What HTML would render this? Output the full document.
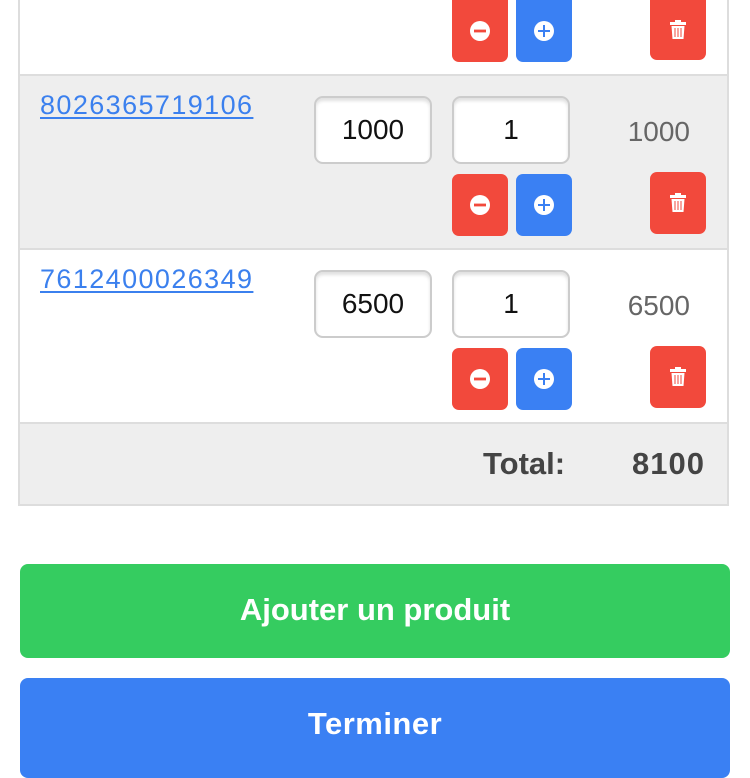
<!DOCTYPE html>
<html><head><meta charset="utf-8"><style>
*{box-sizing:border-box;margin:0;padding:0}
body{width:750px;height:750px;overflow:hidden;background:#fff;font-family:"Liberation Sans",Helvetica,Arial,sans-serif;position:relative}
.a{position:absolute}
.row{position:absolute;left:18px;width:711px;border-left:2px solid #ddd;border-right:2px solid #ddd}
.g{background:#eee}
.hl{position:absolute;left:18px;width:711px;height:2px;background:#ddd}
.lnk{position:absolute;left:40px;color:#3b80ee;font-size:27px;text-decoration:underline;text-decoration-thickness:2px;text-underline-offset:3px;letter-spacing:1.4px}
.inp{position:absolute;width:118px;height:68px;border:2px solid #ccc;border-radius:9px;background:#fff;box-shadow:inset 0 3px 3px rgba(0,0,0,.12);font-size:28px;color:#111;text-align:center;line-height:64px}
.btn{position:absolute;width:56px;height:62px;border-radius:7px}
.red{background:#f2493c}.blue{background:#3a80f3}
.price{position:absolute;right:60px;font-size:28px;color:#666}
.ic{position:absolute;left:18px;top:21px;width:20px;height:20px}
.big{position:absolute;left:20px;width:710px;border-radius:8px;color:#fff;font-weight:bold;font-size:31px;text-align:center}
</style></head><body>
<div class="row" style="top:0;height:74px;background:#fff"></div>
<div class="hl" style="top:74px"></div>
<div class="row g" style="top:76px;height:172px"></div>
<div class="hl" style="top:248px"></div>
<div class="row" style="top:250px;height:172px;background:#fff"></div>
<div class="hl" style="top:422px"></div>
<div class="row g" style="top:424px;height:81px"></div>
<div class="hl" style="top:504px"></div>

<div class="btn red" style="left:452px;top:0;height:62px;border-radius:0 0 7px 7px"><svg class="ic" viewBox="0 0 20 20"><circle cx="10" cy="10" r="10" fill="#fff"/><rect x="4" y="8.6" width="12" height="2.8" fill="#f2493c"/></svg></div>
<div class="btn blue" style="left:516px;top:0;height:62px;border-radius:0 0 7px 7px"><svg class="ic" viewBox="0 0 20 20"><circle cx="10" cy="10" r="10" fill="#fff"/><rect x="4" y="9" width="12" height="2" fill="#3a80f3"/><rect x="9" y="4" width="2" height="12" fill="#3a80f3"/></svg></div>
<div class="btn red" style="left:650px;top:0;height:60px;border-radius:0 0 7px 7px"><svg style="position:absolute;left:19px;top:20px" width="18" height="20" viewBox="0 0 18 20"><rect x="6" y="0" width="6" height="2" fill="#fff"/><rect x="1" y="2" width="16" height="3" fill="#fff"/><path d="M2.5 6h13l-1 13h-11z" fill="#fff"/><path d="M6 8v9M9 8v9M12 8v9" stroke="#f2493c" stroke-width="1"/></svg></div>

<div class="lnk" style="top:90px">8026365719106</div>
<div class="inp" style="left:314px;top:96px">1000</div>
<div class="inp" style="left:452px;top:96px">1</div>
<div class="price" style="top:116px">1000</div>
<div class="btn red" style="left:452px;top:174px"><svg class="ic" viewBox="0 0 20 20"><circle cx="10" cy="10" r="10" fill="#fff"/><rect x="4" y="8.6" width="12" height="2.8" fill="#f2493c"/></svg></div>
<div class="btn blue" style="left:516px;top:174px"><svg class="ic" viewBox="0 0 20 20"><circle cx="10" cy="10" r="10" fill="#fff"/><rect x="4" y="9" width="12" height="2" fill="#3a80f3"/><rect x="9" y="4" width="2" height="12" fill="#3a80f3"/></svg></div>
<div class="btn red" style="left:650px;top:172px"><svg style="position:absolute;left:19px;top:21px" width="18" height="20" viewBox="0 0 18 20"><rect x="6" y="0" width="6" height="2" fill="#fff"/><rect x="1" y="2" width="16" height="3" fill="#fff"/><path d="M2.5 6h13l-1 13h-11z" fill="#fff"/><path d="M6 8v9M9 8v9M12 8v9" stroke="#f2493c" stroke-width="1"/></svg></div>

<div class="lnk" style="top:264px">7612400026349</div>
<div class="inp" style="left:314px;top:270px">6500</div>
<div class="inp" style="left:452px;top:270px">1</div>
<div class="price" style="top:290px">6500</div>
<div class="btn red" style="left:452px;top:348px"><svg class="ic" viewBox="0 0 20 20"><circle cx="10" cy="10" r="10" fill="#fff"/><rect x="4" y="8.6" width="12" height="2.8" fill="#f2493c"/></svg></div>
<div class="btn blue" style="left:516px;top:348px"><svg class="ic" viewBox="0 0 20 20"><circle cx="10" cy="10" r="10" fill="#fff"/><rect x="4" y="9" width="12" height="2" fill="#3a80f3"/><rect x="9" y="4" width="2" height="12" fill="#3a80f3"/></svg></div>
<div class="btn red" style="left:650px;top:346px"><svg style="position:absolute;left:19px;top:21px" width="18" height="20" viewBox="0 0 18 20"><rect x="6" y="0" width="6" height="2" fill="#fff"/><rect x="1" y="2" width="16" height="3" fill="#fff"/><path d="M2.5 6h13l-1 13h-11z" fill="#fff"/><path d="M6 8v9M9 8v9M12 8v9" stroke="#f2493c" stroke-width="1"/></svg></div>

<div class="a" style="left:483px;top:446px;font-size:31px;font-weight:bold;color:#444">Total:</div>
<div class="a" style="right:45px;top:446px;font-size:31px;font-weight:bold;color:#444;letter-spacing:1px">8100</div>

<div class="big" style="top:564px;height:94px;line-height:92px;background:#35cc60">Ajouter un produit</div>
<div class="big" style="top:678px;height:100px;line-height:92px;background:#3a80f3;letter-spacing:0.5px">Terminer</div>
</body></html>
